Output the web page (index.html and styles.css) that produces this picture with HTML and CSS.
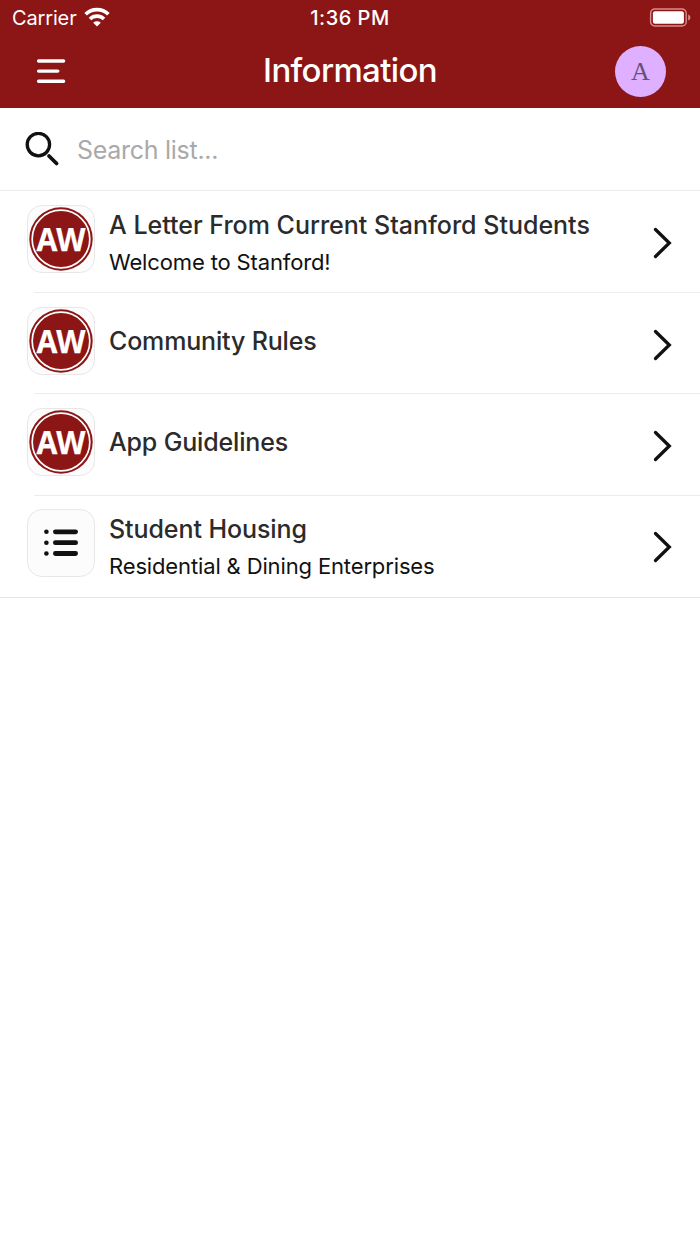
FILE: index.html
```html
<!DOCTYPE html>
<html lang="en">
<head>
<meta charset="utf-8">
<title>Information</title>
<link rel="stylesheet" href="styles.css">
</head>
<body>
<header class="header">
  <div class="status">
    <div class="status-left">
      <span class="carrier">Carrier</span>
      <svg class="wifi" width="26" height="20" viewBox="0 0 26 20">
        <g fill="none" stroke="#fff" stroke-width="3.7">
          <path d="M1.6 7.3a16.2 16.2 0 0 1 22.8 0"/>
          <path d="M6 12a10 10 0 0 1 14 0"/>
        </g>
        <path d="M9.2 15.8a5.6 5.6 0 0 1 7.6 0L13 19.4z" fill="#fff"/>
      </svg>
    </div>
    <span class="time">1:36 PM</span>
    <svg class="battery" width="42" height="20" viewBox="0 0 42 20">
      <rect x="1.6" y="1" width="35.6" height="17" rx="4.2" fill="none" stroke="#d58f8f" stroke-width="1.4"/>
      <rect x="3.9" y="3.3" width="31" height="12.4" rx="2" fill="#fff"/>
      <path d="M39.2 6.4c1.4.5 2.1 1.7 2.1 3.1s-.7 2.6-2.1 3.1z" fill="#d58f8f"/>
    </svg>
  </div>
  <div class="nav">
    <svg class="menu" width="30" height="26" viewBox="0 0 30 26">
      <path d="M2.6 3h25M2.6 13.1h19.2M2.6 23.3h25" fill="none" stroke="#fff" stroke-width="3.4" stroke-linecap="round"/>
    </svg>
    <h1 class="heading">Information</h1>
    <div class="avatar">A</div>
  </div>
</header>
<div class="search">
  <svg class="search-icon" width="36" height="36" viewBox="0 0 36 36">
    <circle cx="13.4" cy="12.6" r="11.2" fill="none" stroke="#111" stroke-width="3.3"/>
    <path d="M24 24 31.6 31.5" stroke="#111" stroke-width="3.8" stroke-linecap="round"/>
  </svg>
  <span class="placeholder">Search list...</span>
</div>
<main class="list">
  <div class="row">
    <div class="thumb"><svg width="66" height="66" viewBox="0 0 66 66"><circle class="disc" cx="33" cy="33" r="31.7"/><circle class="ring" cx="33" cy="33" r="28.8"/><text class="aw-text" x="8.6" y="44.7" textLength="49" lengthAdjust="spacingAndGlyphs">AW</text></svg></div>
    <div class="content"><div class="title t1">A Letter From Current Stanford Students</div><div class="sub">Welcome to Stanford!</div></div>
    <svg class="chevron" width="20" height="32" viewBox="0 0 20 32"><path d="M3.5 2.5 17.3 16 3.5 29.5"/></svg>
  </div>
  <div class="row">
    <div class="thumb"><svg width="66" height="66" viewBox="0 0 66 66"><circle class="disc" cx="33" cy="33" r="31.7"/><circle class="ring" cx="33" cy="33" r="28.8"/><text class="aw-text" x="8.6" y="44.7" textLength="49" lengthAdjust="spacingAndGlyphs">AW</text></svg></div>
    <div class="content single"><div class="title">Community Rules</div></div>
    <svg class="chevron" width="20" height="32" viewBox="0 0 20 32"><path d="M3.5 2.5 17.3 16 3.5 29.5"/></svg>
  </div>
  <div class="row">
    <div class="thumb"><svg width="66" height="66" viewBox="0 0 66 66"><circle class="disc" cx="33" cy="33" r="31.7"/><circle class="ring" cx="33" cy="33" r="28.8"/><text class="aw-text" x="8.6" y="44.7" textLength="49" lengthAdjust="spacingAndGlyphs">AW</text></svg></div>
    <div class="content single"><div class="title">App Guidelines</div></div>
    <svg class="chevron" width="20" height="32" viewBox="0 0 20 32"><path d="M3.5 2.5 17.3 16 3.5 29.5"/></svg>
  </div>
  <div class="row">
    <div class="thumb"><svg width="66" height="66" viewBox="0 0 66 66">
      <g stroke="#111" stroke-linecap="round" stroke-width="4.8"><path d="M27.4 21.8h20.2M27.4 32.7h20.2M27.4 43.5h20.2"/></g>
      <g fill="#111"><circle cx="18.4" cy="21.8" r="2.3"/><circle cx="18.4" cy="32.7" r="2.3"/><circle cx="18.4" cy="43.5" r="2.3"/></g>
    </svg></div>
    <div class="content"><div class="title t4">Student Housing</div><div class="sub">Residential &amp; Dining Enterprises</div></div>
    <svg class="chevron" width="20" height="32" viewBox="0 0 20 32"><path d="M3.5 2.5 17.3 16 3.5 29.5"/></svg>
  </div>
</main>
</body>
</html>
```
FILE: styles.css
```css
* { box-sizing: border-box; }
body { margin: 0; background: #fff; font-family: Inter, "Liberation Sans", sans-serif; color: #111; }
svg { display: block; flex: none; }
.header { height: 108px; background: #8c1515; color: #fff; }
.status { height: 36px; display: grid; grid-template-columns: 1fr auto 1fr; align-items: center; padding: 0 9px 0 12px; }
.status-left { display: flex; align-items: center; gap: 8px; }
.carrier, .time { font-size: 20px; line-height: 36px; white-space: nowrap; }
.carrier { width: 64px; letter-spacing: -.15px; }
.time { font-weight: 500; letter-spacing: .5px; margin-right: 3px; }
.wifi { margin-top: -3px; }
.battery { justify-self: end; margin-top: -1px; }
.nav { height: 72px; display: grid; grid-template-columns: 1fr auto 1fr; align-items: center; padding: 0 34px 0 36px; }
.heading { margin: 0; font-size: 33px; font-weight: 500; line-height: 40px; letter-spacing: -.65px; padding: 0 2px 4px 0; }
.avatar { justify-self: end; width: 51px; height: 51px; margin-bottom: 2px; border-radius: 50%; background: #deb0ff; color: #66517a; font: 26px/52px "Liberation Serif", serif; text-align: center; }
.menu { margin-top: -2px; }
.search { height: 83.4px; display: flex; align-items: center; gap: 16px; padding: 1px 25px 0; border-bottom: 1px solid #ededed; }
.placeholder { font-size: 25px; letter-spacing: -.28px; color: #a9a9a9; line-height: 32px; }
.list { border-bottom: 1px solid #e5e5e5; }
.row { height: 101.45px; display: grid; grid-template-columns: 68px 1fr 20px; column-gap: 14px; padding: 13.7px 28px 0 27px; background: linear-gradient(#ededed, #ededed) 34px 100% / 100% 1px no-repeat; }
.row:last-child { background: none; }
.thumb { width: 68px; height: 68px; border: 1px solid #e7e7e7; border-radius: 15px; background: #fcfcfc; }
.disc { fill: #8c1515; }
.ring { fill: none; stroke: #fff; stroke-width: 1.7px; }
.aw-text { font: bold 32px "Noto Sans", "Open Sans", sans-serif; fill: #fff; stroke: #fff; stroke-width: .25px; }
.content { height: 76px; display: flex; flex-direction: column; justify-content: center; gap: 5px; white-space: nowrap; }
.single { height: 68.6px; }
.title { font-size: 25px; line-height: 32px; font-weight: 500; letter-spacing: -.16px; color: #2b2b2b; }
.t1 { letter-spacing: 0; }
.t4 { letter-spacing: -.08px; }
.sub { font-size: 22px; line-height: 32px; letter-spacing: -.14px; }
.chevron { margin-top: 22px; }
.chevron path { fill: none; stroke: #111; stroke-width: 3.3px; stroke-linecap: round; }
```
